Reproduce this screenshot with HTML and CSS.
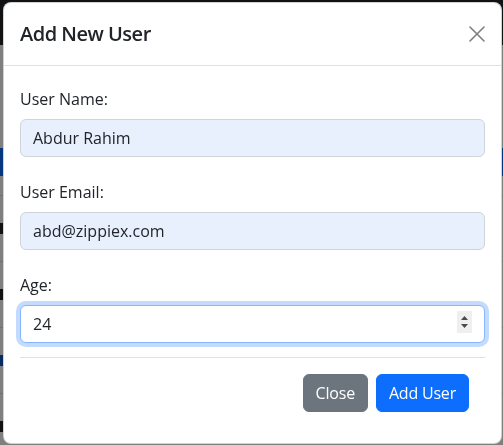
FILE: index.html
```html
<!DOCTYPE html>
<html lang="en">
<head>
<meta charset="utf-8">
<title>Add New User</title>
<link rel="stylesheet" href="styles.css">
</head>
<body>
<div class="page">
  <nav class="navbar"></nav>
  <div class="content">
    <div class="btn-bg"></div>
    <div class="row-bg"><span class="mark"></span></div>
    <div class="row-bg"><span class="mark"></span></div>
    <div class="row-bg"><span class="mark blue"></span></div>
    <div class="row-bg"><span class="mark"></span></div>
  </div>
</div>
<div class="backdrop"></div>
<div class="modal">
  <div class="modal-header">
    <h5 class="modal-title">Add New User</h5>
    <button class="btn-close" type="button" aria-label="Close">
      <svg viewBox="0 0 16 16" width="16" height="16"><path d="M1 1 L15 15 M15 1 L1 15" stroke="#000" stroke-width="1.6" stroke-linecap="round" fill="none"/></svg>
    </button>
  </div>
  <div class="modal-body">
    <form class="form">
      <div class="field">
        <label class="label">User Name:</label>
        <input class="input autofill" type="text" value="Abdur Rahim">
      </div>
      <div class="field">
        <label class="label">User Email:</label>
        <input class="input autofill" type="email" value="abd@zippiex.com">
      </div>
      <div class="field last">
        <label class="label">Age:</label>
        <div class="input-wrap">
          <input class="input focused" type="text" value="24">
          <span class="spinner">
            <svg viewBox="0 0 15 22" width="15" height="22"><path d="M4 9 L7.5 5 L11 9 Z M4 13 L7.5 17 L11 13 Z" fill="#4a4a4a"/></svg>
          </span>
        </div>
      </div>
      <div class="modal-footer">
        <button class="btn btn-secondary" type="button">Close</button>
        <button class="btn btn-primary" type="button">Add User</button>
      </div>
    </form>
  </div>
</div>
</body>
</html>
```
FILE: styles.css
```css
* { box-sizing: border-box; }
html, body { margin: 0; padding: 0; }
body {
  font-family: "Open Sans", "Noto Sans", sans-serif;
  color: #212529;
  background: #fff;
  width: 503px;
  height: 445px;
  overflow: hidden;
}
.page { width: 503px; height: 445px; }
.navbar { height: 45px; background: #212529; }
.content { padding-top: 103px; }
.btn-bg {
  height: 28px; background: #0d6efd;
  margin-bottom: 19px;
}
.row-bg {
  border-top: 1px solid #dee2e6;
  height: 66px;
  display: flex;
  align-items: center;
}
.mark { display: block; width: 3px; height: 11px; background: #212529; }
.mark.blue { background: #0a58ca; }
.backdrop {
  position: fixed; inset: 0;
  background: rgba(0, 0, 0, .5);
}
.modal {
  position: absolute;
  left: 3px; top: 2px;
  width: 499px;
  background: #fff;
  border: 1px solid rgba(0, 0, 0, .175);
  border-radius: 8px;
}
.modal-header {
  display: flex;
  align-items: center;
  padding: 16px;
  border-bottom: 1px solid #dee2e6;
}
.modal-title {
  margin: 0;
  font-size: 20px;
  line-height: 30px;
  font-weight: 600;
  letter-spacing: -0.5px;
  flex: 1;
}
.btn-close {
  width: 16px; height: 16px;
  padding: 0; margin: 0;
  border: 0; background: transparent;
  opacity: .5;
  display: flex;
}
.modal-body { padding: 16px 16px 15px; }
.form { display: flex; flex-direction: column; }
.field { margin-bottom: 23px; }
.field:first-child { margin-top: 5px; }
.field.last { margin-bottom: 14px; }
.label {
  display: block;
  font-size: 16px;
  line-height: 24px;
  margin-bottom: 8px;
}
.input-wrap { position: relative; }
.input {
  display: block;
  width: 100%;
  height: 38px;
  padding: 6px 12px;
  font-family: inherit;
  font-size: 16px;
  line-height: 24px;
  color: #212529;
  background: #fff;
  border: 1px solid #ced4da;
  border-radius: 6px;
  outline: none;
}
.input.autofill { background: #e8f0fe; }
.input.focused {
  border-color: #86b7fe;
  box-shadow: 0 0 0 4px rgba(13, 110, 253, .25);
}
.spinner {
  position: absolute;
  right: 13px; top: 6px;
  width: 15px; height: 22px;
  background: #efefef;
  display: flex;
}
.modal-footer {
  display: flex;
  justify-content: flex-end;
  gap: 8px;
  padding: 16px 16px;
  border-top: 1px solid #dee2e6;
}
.btn {
  font-family: inherit;
  font-size: 16px;
  line-height: 24px;
  padding: 6px 12px;
  border-radius: 6px;
  border: 1px solid transparent;
  color: #fff;
  letter-spacing: -0.2px;
}
.btn-secondary { background: #6c757d; border-color: #6c757d; }
.btn-primary { background: #0d6efd; border-color: #0d6efd; }
```
